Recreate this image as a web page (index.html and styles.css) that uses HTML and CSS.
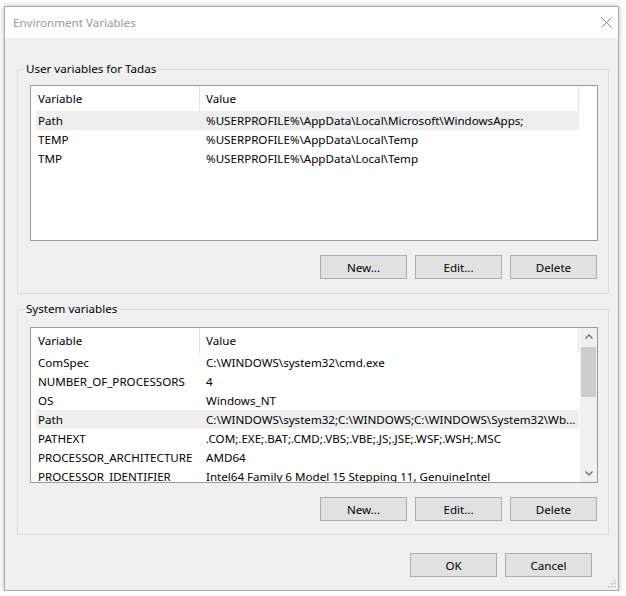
FILE: index.html
```html
<!DOCTYPE html>
<html lang="en">
<head>
    <meta charset="UTF-8">
    <title>Environment Variables</title>
    <link rel="stylesheet" href="styles.css">
</head>
<body>
    <div class="window">
        <div class="titlebar">
            <span class="title">Environment Variables</span>
            <svg class="close" width="11" height="11" viewBox="0 0 11 11">
                <path d="M0.5 0.5 L10.5 10.5 M10.5 0.5 L0.5 10.5" stroke="#808080" stroke-width="1" fill="none"/>
            </svg>
        </div>

        <div class="content">
            <fieldset class="group group-user">
                <legend>User variables for Tadas</legend>
                <div class="list">
                    <div class="list-main">
                        <div class="list-head">
                            <span class="col col-name">Variable</span>
                            <span class="col col-value">Value</span>
                        </div>
                        <div class="row selected"><span class="cell">Path</span><span class="cell cell-value">%USERPROFILE%\AppData\Local\Microsoft\WindowsApps;</span></div>
                        <div class="row"><span class="cell">TEMP</span><span class="cell cell-value">%USERPROFILE%\AppData\Local\Temp</span></div>
                        <div class="row"><span class="cell">TMP</span><span class="cell cell-value">%USERPROFILE%\AppData\Local\Temp</span></div>
                    </div>
                </div>
                <div class="buttons">
                    <button>New...</button>
                    <button>Edit...</button>
                    <button>Delete</button>
                </div>
            </fieldset>

            <fieldset class="group group-system">
                <legend>System variables</legend>
                <div class="list">
                    <div class="list-main">
                        <div class="list-head">
                            <span class="col col-name">Variable</span>
                            <span class="col col-value">Value</span>
                        </div>
                        <div class="row"><span class="cell">ComSpec</span><span class="cell cell-value">C:\WINDOWS\system32\cmd.exe</span></div>
                        <div class="row"><span class="cell">NUMBER_OF_PROCESSORS</span><span class="cell cell-value">4</span></div>
                        <div class="row"><span class="cell">OS</span><span class="cell cell-value">Windows_NT</span></div>
                        <div class="row selected"><span class="cell">Path</span><span class="cell cell-value">C:\WINDOWS\system32;C:\WINDOWS;C:\WINDOWS\System32\Wb...</span></div>
                        <div class="row"><span class="cell">PATHEXT</span><span class="cell cell-value">.COM;.EXE;.BAT;.CMD;.VBS;.VBE;.JS;.JSE;.WSF;.WSH;.MSC</span></div>
                        <div class="row"><span class="cell">PROCESSOR_ARCHITECTURE</span><span class="cell cell-value">AMD64</span></div>
                        <div class="row"><span class="cell">PROCESSOR_IDENTIFIER</span><span class="cell cell-value">Intel64 Family 6 Model 15 Stepping 11, GenuineIntel</span></div>
                    </div>
                    <div class="scrollbar">
                        <div class="sb-btn">
                            <svg width="8" height="5" viewBox="0 0 8 5"><polyline points="0.5,4.5 4,1 7.5,4.5" fill="none" stroke="#606060" stroke-width="1.2"/></svg>
                        </div>
                        <div class="sb-track"><div class="sb-thumb"></div></div>
                        <div class="sb-btn">
                            <svg width="8" height="5" viewBox="0 0 8 5"><polyline points="0.5,0.5 4,4 7.5,0.5" fill="none" stroke="#606060" stroke-width="1.2"/></svg>
                        </div>
                    </div>
                </div>
                <div class="buttons">
                    <button>New...</button>
                    <button>Edit...</button>
                    <button>Delete</button>
                </div>
            </fieldset>

            <div class="dialog-buttons">
                <button>OK</button>
                <button>Cancel</button>
            </div>
        </div>

        <svg class="grip" width="10" height="10" viewBox="0 0 10 10">
            <rect x="8" y="2" width="1.5" height="1.5" fill="#b5b5b5"/>
            <rect x="5" y="5" width="1.5" height="1.5" fill="#b5b5b5"/>
            <rect x="8" y="5" width="1.5" height="1.5" fill="#b5b5b5"/>
            <rect x="2" y="8" width="1.5" height="1.5" fill="#b5b5b5"/>
            <rect x="5" y="8" width="1.5" height="1.5" fill="#b5b5b5"/>
            <rect x="8" y="8" width="1.5" height="1.5" fill="#b5b5b5"/>
        </svg>
    </div>
</body>
</html>
```

FILE: styles.css
```css
body {
    margin: 0;
    background-color: #fff;
    font-family: "Noto Sans", "Segoe UI", sans-serif;
    font-size: 11.6px;
    color: #000;
}

.window {
    position: relative;
    box-sizing: border-box;
    width: 615px;
    height: 585px;
    margin: 6px 0 0 4px;
    border: 1px solid #a8a8a8;
    background-color: #f0f0f0;
    box-shadow: 0 0 6px rgba(0, 0, 0, 0.25);
}

.titlebar {
    height: 31px;
    background-color: #fff;
    display: flex;
    align-items: center;
    justify-content: space-between;
    padding: 0 6px 0 8px;
}

.title {
    color: #999;
}

.close {
    display: block;
}

.content {
    padding: 0 9px 0 12px;
}

.group {
    margin: 23px 0 0;
    padding: 0 10px 14px 12px;
    border: 1px solid #dcdcdc;
    min-width: 0;
}

.group legend {
    padding: 0 2px;
    margin-left: -6px;
    line-height: 16px;
}

.group-system {
    margin-top: 7px;
    padding-bottom: 13px;
}

.list {
    display: flex;
    height: 156px;
    box-sizing: border-box;
    margin-top: 8px;
    border: 1px solid #9a9a9a;
    background-color: #fff;
    overflow: hidden;
}

.group-system .list {
    margin-top: 10px;
}

.list-main {
    flex: 1;
    min-width: 0;
    overflow: hidden;
}

.list-head {
    display: grid;
    grid-template-columns: 169px 379px;
    height: 25px;
    line-height: 25px;
}

.col {
    box-sizing: border-box;
    border-right: 1px solid #e5e5e5;
    white-space: nowrap;
}

.col-name {
    padding-left: 7px;
}

.col-value {
    padding-left: 6px;
}

.row {
    display: grid;
    grid-template-columns: 164px 379px;
    margin-left: 5px;
    width: 543px;
    height: 19px;
    line-height: 19px;
}

.row.selected {
    background-color: #eeeeee;
}

.cell {
    padding-left: 2px;
    white-space: nowrap;
    overflow: hidden;
}

.cell-value {
    padding-left: 6px;
}

.scrollbar {
    flex: 0 0 17px;
    display: flex;
    flex-direction: column;
    background-color: #f0f0f0;
}

.sb-btn {
    height: 17px;
    display: flex;
    align-items: center;
    justify-content: center;
}

.sb-track {
    flex: 1;
    padding-top: 2px;
}

.sb-thumb {
    height: 50px;
    margin: 0 1px;
    background-color: #cdcdcd;
}

.buttons,
.dialog-buttons {
    display: flex;
    justify-content: flex-end;
    gap: 8px;
}

.buttons {
    margin-top: 14px;
    padding-right: 1px;
}

.dialog-buttons {
    margin-top: 18px;
    padding-right: 17px;
}

button {
    width: 87px;
    height: 24px;
    padding: 0;
    border: 1px solid #adadad;
    background-color: #e1e1e1;
    font-family: inherit;
    font-size: 11.6px;
    color: #000;
}

.grip {
    position: absolute;
    right: 2px;
    bottom: 2px;
}
```
